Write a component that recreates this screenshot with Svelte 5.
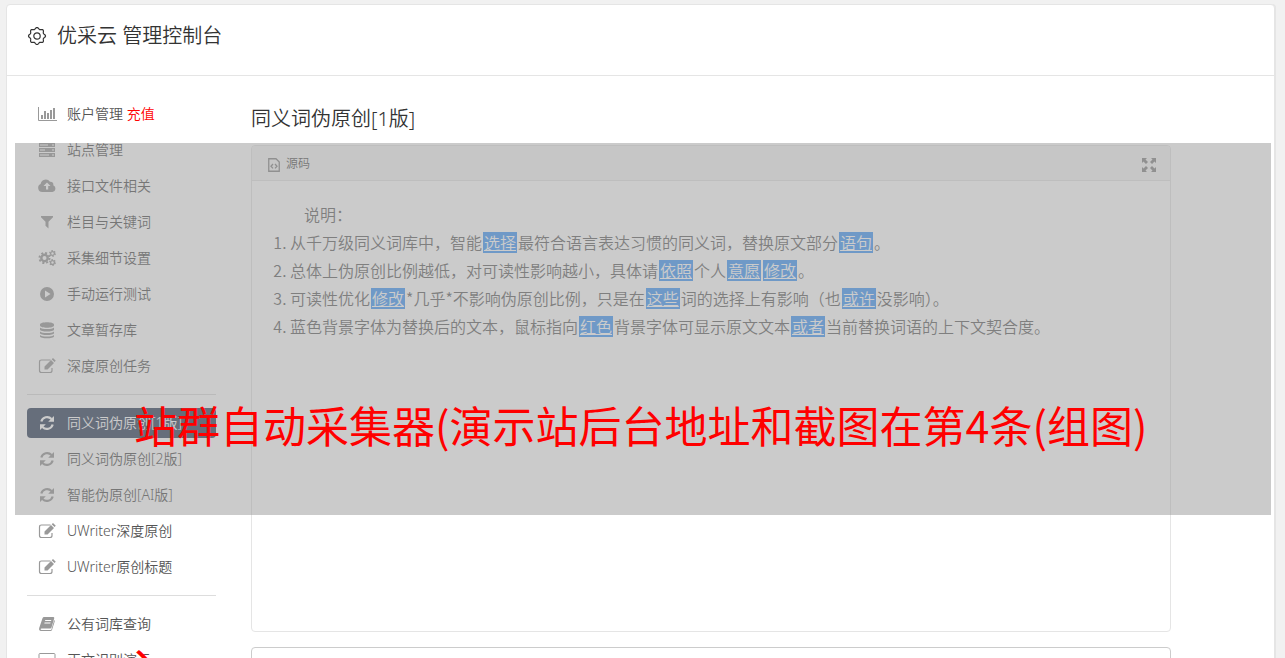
<script lang="ts">
  type Item = { icon: string; label: string; extra?: string; active?: boolean };

  const groups: Item[][] = [
    [
      { icon: 'chart', label: '账户管理', extra: '充值' },
      { icon: 'server', label: '站点管理' },
      { icon: 'cloud', label: '接口文件相关' },
      { icon: 'filter', label: '栏目与关键词' },
      { icon: 'cogs', label: '采集细节设置' },
      { icon: 'play', label: '手动运行测试' },
      { icon: 'database', label: '文章暂存库' },
      { icon: 'edit', label: '深度原创任务' },
    ],
    [
      { icon: 'refresh', label: '同义词伪原创[1版]', active: true },
      { icon: 'refresh', label: '同义词伪原创[2版]' },
      { icon: 'refresh', label: '智能伪原创[AI版]' },
      { icon: 'edit', label: 'UWriter深度原创' },
      { icon: 'edit', label: 'UWriter原创标题' },
    ],
    [
      { icon: 'book', label: '公有词库查询' },
      { icon: 'laptop', label: '正文识别演示' },
    ],
  ];

  // replaced words are wrapped in braces
  const notes = [
    '从千万级同义词库中，智能{选择}最符合语言表达习惯的同义词，替换原文部分{语句}。',
    '总体上伪原创比例越低，对可读性影响越小，具体请{依照}个人{意愿}{修改}。',
    '可读性优化{修改}*几乎*不影响伪原创比例，只是在{这些}词的选择上有影响（也{或许}没影响）。',
    '蓝色背景字体为替换后的文本，鼠标指向{红色}背景字体可显示原文文本{或者}当前替换词语的上下文契合度。',
  ];

  function split(text: string) {
    return text
      .split(/(\{.+?\})/)
      .filter(Boolean)
      .map((t) => ({ mark: t[0] === '{', text: t.replace(/[{}]/g, '') }));
  }

  // scalloped outline of the header gear
  const gear = (() => {
    let d = '';
    for (let i = 0; i <= 96; i++) {
      const a = (i / 96) * Math.PI * 2;
      const r = 7.7 + 0.8 * Math.cos(a * 8);
      d += `${i ? 'L' : 'M'}${(10 + r * Math.cos(a)).toFixed(2)} ${(10 + r * Math.sin(a)).toFixed(2)}`;
    }
    return d + 'Z';
  })();
</script>

{#snippet icon(name: string)}
  <svg class="icon" viewBox="0 0 20 18" aria-hidden="true">
    {#if name === 'chart'}
      <path d="M1.5 2v13.5H20" fill="none" stroke="currentColor" />
      <path d="M4 10h2v4H4zM7 6h2v8H7zM10 8h2v6h-2zM13 5h2v9h-2zM16 3h2v11h-2z" />
    {:else if name === 'server'}
      <path
        fill-rule="evenodd"
        d="M2 2h16v4H2zM2 7h16v4H2zM2 12h16v4H2zM3 3.5v1h8v-1zM3 8.5v1h5v-1zM3 13.5v1h9v-1zM15 3.5v1h2v-1zM15 8.5v1h2v-1zM15 13.5v1h2v-1z"
      />
    {:else if name === 'cloud'}
      <path
        fill-rule="evenodd"
        d="M5.2 15A4.2 4.2 0 0 1 3.6 7 5.2 5.2 0 0 1 13 4.8a2.8 2.8 0 0 1 3.3 3.5A3.5 3.5 0 0 1 15.5 15zM10 5.5 6.5 9H9v3.5h2.2V9h2.3z"
      />
    {:else if name === 'filter'}
      <path d="M4 3h12v1.2l-4.5 4.6v6.7l-3-2.7v-4L4 4.2z" />
    {:else if name === 'cogs'}
      <circle cx="7.5" cy="9" r="3.2" fill="none" stroke="currentColor" stroke-width="2.4" />
      <circle cx="7.5" cy="9" r="5" fill="none" stroke="currentColor" stroke-width="2" stroke-dasharray="2 1.93" />
      <circle cx="15.5" cy="4.5" r="1.9" fill="none" stroke="currentColor" stroke-width="1.3" />
      <circle cx="15.5" cy="4.5" r="2.8" fill="none" stroke="currentColor" stroke-width="1.2" stroke-dasharray="1.5 1.43" />
      <circle cx="15.5" cy="13.5" r="1.9" fill="none" stroke="currentColor" stroke-width="1.3" />
      <circle cx="15.5" cy="13.5" r="2.8" fill="none" stroke="currentColor" stroke-width="1.2" stroke-dasharray="1.5 1.43" />
    {:else if name === 'play'}
      <path fill-rule="evenodd" d="M10 2a7 7 0 1 0 0 14 7 7 0 0 0 0-14zM8 5.5 13.5 9 8 12.5z" />
    {:else if name === 'database'}
      <path d="M3 3.5C3 .5 17 .5 17 3.5v1c0 3-14 3-14 0zM3 6.500c2 2 12 2 14 0v2c0 2.700-14 2.700-14 0zM3 10.500c2 2 12 2 14 0v1.500c0 2.700-14 2.700-14 0zM3 14c2 2 12 2 14 0v1.200c0 2.700-14 2.700-14 0z" />
    {:else if name === 'edit'}
      <path
        d="M13.5 3h-9q-2 0-2 2v8.500q0 2 2 2H13q2 0 2-2V11"
        fill="none"
        stroke="currentColor"
        stroke-width="1.2"
      />
      <path d="m7.500 9.500 6.500-6.500 3 3-6.500 6.500h-3zM14.700 2.300l1.300-1.300 2.800 2.800-1.300 1.300z" />
    {:else if name === 'refresh'}
      <path
        d="M4.300 7.500A6 6 0 0 1 14.500 5M15.700 10.500A6 6 0 0 1 5.500 13"
        fill="none"
        stroke="currentColor"
        stroke-width="2.2"
      />
      <path d="M17 2v5.800h-5.800zM3 16v-5.800h5.800z" />
    {:else if name === 'book'}
      <path
        fill-rule="evenodd"
        d="M7 2h9.500q1 .2.700 1.500L14.500 12.500q-.3 1-1.300 1H4.500q-1 0-.9.700.1.800 1 .8h9q.6 0 .8-.6L17.200 5q.8.500.5 1.500l-2.700 8.500q-.4 1-1.500 1H4Q1.500 15.500 2.200 13L5.500 3.300Q6 2 7 2zM8.300 5l-.3 1h6l.3-1zM7.600 7.500l-.3 1h6l.3-1z"
      />
    {:else if name === 'laptop'}
      <rect x="2" y="2.5" width="16" height="11" rx="1" fill="none" stroke="currentColor" />
      <path d="M0 14.500h20v1.500H0z" />
    {/if}
  </svg>
{/snippet}

<div class="page">
  <div class="panel">
    <header class="panel-head">
      <svg class="gear" viewBox="0 0 20 20" aria-hidden="true">
        <path d={gear} />
        <circle cx="10" cy="10" r="3.2" />
      </svg>
      <h1>优采云 管理控制台</h1>
    </header>

    <div class="panel-body">
      <nav class="sidebar">
        {#each groups as group}
          <ul>
            {#each group as item}
              <li>
                <a href="#menu" class:active={item.active}>
                  {@render icon(item.icon)}
                  <span>{item.label} {#if item.extra}<em>{item.extra}</em>{/if}</span>
                </a>
              </li>
            {/each}
          </ul>
        {/each}
      </nav>

      <main>
        <h2>同义词伪原创[1版]</h2>
        <section class="editor">
          <div class="toolbar">
            <button type="button">
              <svg class="source" viewBox="0 0 12 14" aria-hidden="true">
                <path d="M.75.75H8L11.250 4v9.250H.75z" />
                <path d="M5 6 3 8.200l2 2.200M7 6l2 2.200-2 2.200" />
              </svg>
              源码
            </button>
            <button type="button" aria-label="全屏">
              <svg class="expand" viewBox="0 0 14 14" aria-hidden="true">
                <path d="M0 0h5L3.500 1.500 6 4 4 6 1.500 3.500 0 5zM14 0v5l-1.500-1.500L10 6 8 4l2.500-2.500L9 0zM0 14V9l1.500 1.500L4 8l2 2-2.500 2.500L5 14zM14 14H9l1.500-1.500L8 10l2-2 2.500 2.500L14 9z" />
              </svg>
            </button>
          </div>
          <div class="content">
            <p>说明：</p>
            <ol>
              {#each notes as note}
                <li>{#each split(note) as part}{#if part.mark}<mark>{part.text}</mark>{:else}{part.text}{/if}{/each}</li>
              {/each}
            </ol>
          </div>
        </section>
        <textarea aria-label="结果"></textarea>
      </main>
    </div>
  </div>

  <div class="shade"></div>
  <div class="caption">站群自动采集器(演示站后台地址和截图在第4条(组图)<br />、</div>
</div>

<style>
  :global(body) {
    background: #f1f1f1;
  }
  .page {
    position: relative;
    height: 100vh;
    overflow: hidden;
    padding: 4px 10px 0 6px;
    box-sizing: border-box;
    font-family: 'Noto Sans', 'Noto Sans CJK SC', sans-serif;
    font-weight: 350;
    color: #333;
  }
  .panel {
    background: #fff;
    border: 1px solid #e5e5e5;
    border-radius: 4px;
    box-shadow: 1px 0 0 #e5e5e5;
  }
  .panel-head {
    display: flex;
    align-items: center;
    gap: 10px;
    padding: 16px 20px 24px;
    border-bottom: 1px solid #e5e5e5;
  }
  .gear {
    width: 20px;
    height: 20px;
    fill: none;
    stroke: #333;
    stroke-width: 1.2;
  }
  h1,
  h2 {
    margin: 0;
    font-size: 20px;
    font-weight: 350;
    line-height: 30px;
  }
  h2 {
    line-height: 40px;
    margin-bottom: 6px;
  }
  .panel-body {
    display: flex;
    gap: 35px;
    padding: 23px 20px;
  }
  .sidebar {
    width: 189px;
    flex-shrink: 0;
  }
  ul {
    display: flex;
    flex-direction: column;
    gap: 6px;
    margin: 0;
    padding: 0;
    list-style: none;
  }
  ul + ul {
    margin-top: 13px;
    padding-top: 13px;
    border-top: 1px solid #ddd;
  }
  .sidebar a {
    display: flex;
    align-items: center;
    gap: 10px;
    height: 30px;
    padding-left: 10px;
    border-radius: 4px;
    font-size: 14px;
    line-height: 30px;
    color: #555;
    text-decoration: none;
    white-space: nowrap;
  }
  .sidebar em {
    color: #f00;
    font-style: normal;
  }
  .icon {
    width: 20px;
    height: 18px;
    fill: currentColor;
    color: #999;
  }
  .sidebar .active {
    background: #35455f;
    color: #fff;
  }
  .active .icon {
    color: #fff;
  }
  main {
    flex: 1;
    min-width: 0;
    max-width: 920px;
  }
  .editor {
    border: 1px solid #e5e5e5;
    border-radius: 4px;
  }
  .toolbar {
    display: flex;
    justify-content: space-between;
    align-items: center;
    height: 34px;
    padding: 0 14px 0 16px;
    background: #f5f5f5;
    border-bottom: 1px solid #e5e5e5;
    border-radius: 3px 3px 0 0;
  }
  .toolbar button {
    display: flex;
    align-items: center;
    gap: 6px;
    padding: 0;
    border: 0;
    background: none;
    font: inherit;
    font-size: 12px;
    color: #555;
  }
  .toolbar svg {
    margin-top: 4px;
  }
  .source {
    width: 12px;
    height: 14px;
    fill: none;
    stroke: #888;
    stroke-width: 1.3;
  }
  .expand {
    width: 14px;
    height: 14px;
    fill: #888;
  }
  .content {
    min-height: 450px;
    padding: 19px 20px;
    box-sizing: border-box;
    font-family: 'Noto Sans CJK SC', sans-serif;
    font-size: 16px;
    line-height: 28px;
    color: #666;
  }
  .content p {
    margin: 0;
    text-indent: 2em;
  }
  ol {
    margin: 0;
    padding-left: 18px;
  }
  mark {
    display: inline-block;
    height: 21px;
    margin: 0 1px;
    padding: 0 1px;
    line-height: 21px;
    background: #479bf7;
    color: #fff;
    text-decoration: underline;
  }
  textarea {
    display: block;
    width: 100%;
    height: 120px;
    margin-top: 15px;
    box-sizing: border-box;
    border: 1px solid #ccc;
    border-radius: 4px;
    resize: none;
  }
  .shade {
    position: absolute;
    top: 143px;
    left: 15px;
    right: 14px;
    height: 372px;
    background: rgba(151, 151, 151, 0.5);
  }
  .caption {
    position: absolute;
    top: 316px;
    left: 134px;
    right: 80px;
    font-family: 'Noto Sans CJK SC', sans-serif;
    font-size: 43px;
    font-weight: 400;
    line-height: 216px;
    color: #f00;
  }
</style>
